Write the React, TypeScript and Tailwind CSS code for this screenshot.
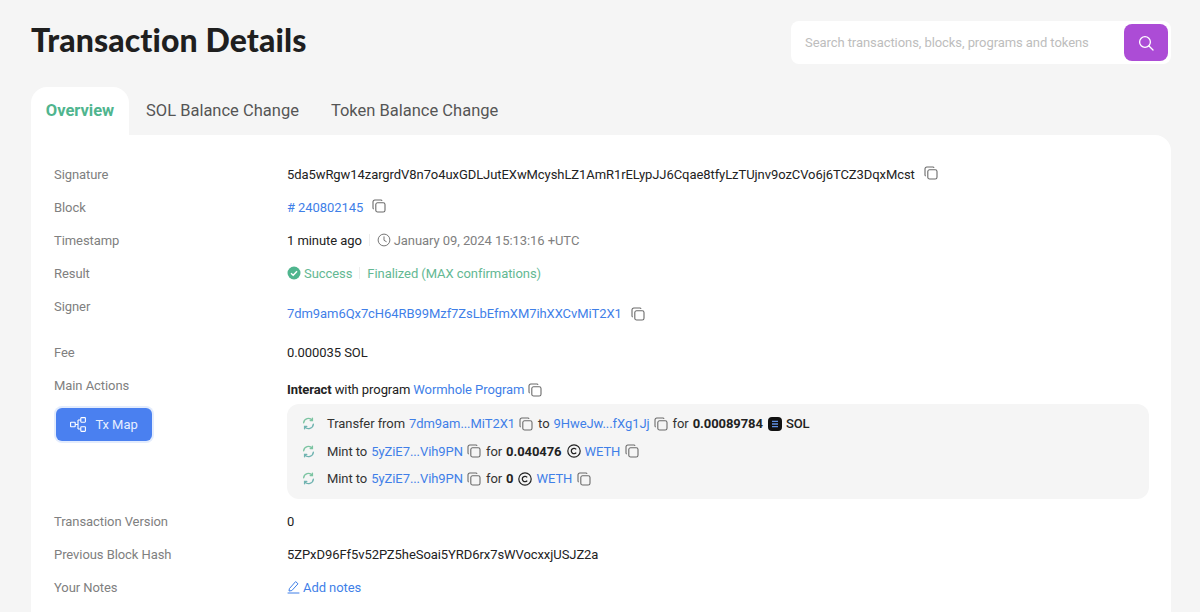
import React from "react";

const Copy = ({ className = "ml-[9px]" }: { className?: string }) => (
  <svg width="14" height="14" viewBox="0 0 14 14" fill="none" stroke="#6b6b6b" strokeWidth="1.1" className={`shrink-0 ${className}`}>
    <rect x="3.8" y="3.8" width="9.2" height="9.2" rx="1.8" />
    <path d="M10 1.8 A1 1 0 0 0 9.2 1 H2.8 A1.8 1.8 0 0 0 1 2.8 V9.2 A1 1 0 0 0 1.8 10" />
  </svg>
);

const Spin = () => (
  <svg width="13" height="13" viewBox="0 0 14 14" fill="none" strokeWidth="1.5" strokeLinecap="round" className="shrink-0">
    <path d="M1.8 6.2 A5.2 5.2 0 0 1 11 3.4" stroke="#7cc4a2" />
    <path d="M11.2 1.4 V3.7 H8.9" stroke="#7cc4a2" />
    <path d="M12.2 7.8 A5.2 5.2 0 0 1 3 10.6" stroke="#6fb3b0" />
    <path d="M2.8 12.6 V10.3 H5.1" stroke="#6fb3b0" />
  </svg>
);

const CoinC = () => (
  <svg width="14" height="14" viewBox="0 0 14 14" fill="none" stroke="#222" className="shrink-0">
    <circle cx="7" cy="7" r="6.2" strokeWidth="1.2" />
    <path d="M9.2 5.4 A2.7 2.7 0 1 0 9.2 8.6" strokeWidth="1.3" />
  </svg>
);

const Link = ({ children }: { children: React.ReactNode }) => <span className="text-[#3f7fe8]">{children}</span>;

const Row = ({ label, children, className = "h-[33px]" }: { label: React.ReactNode; children?: React.ReactNode; className?: string }) => (
  <div className={`flex ${className}`}>
    <div className="w-[233px] shrink-0 text-[#808080] leading-[17px]">{label}</div>
    <div className="flex-1 min-w-0 flex items-start leading-[17px] text-[#222]">{children}</div>
  </div>
);

const ActionLine = ({ children }: { children: React.ReactNode }) => (
  <div className="flex items-center h-[27.5px] whitespace-nowrap text-[#333]">
    <div className="w-[40px] pl-[15px] shrink-0 flex"><Spin /></div>
    {children}
  </div>
);

export default function App() {
  return (
    <div className="w-[1200px] h-[612px] overflow-hidden bg-[#f5f5f5] px-[31px] font-['Roboto',sans-serif] text-[13px] tracking-[-0.07px]">
      <div className="flex items-start justify-between h-[87px] pt-[21px]">
        <h1 className="font-['Lato',sans-serif] font-black text-[32px] leading-[38px] text-[#1f1f1f] tracking-[0.1px]">Transaction Details</h1>
        <div className="w-[380px] h-[43px] bg-white rounded-lg flex items-center pl-[14px] pr-[3px] -mr-[2px] justify-between">
          <span className="text-[13px] text-[#bdbdbd]">Search transactions, blocks, programs and tokens</span>
          <button className="w-[44px] h-[37px] rounded-lg bg-[#ac4cd6] flex items-center justify-center">
            <svg width="16" height="16" viewBox="0 0 16 16" fill="none" stroke="white" strokeWidth="1.3" strokeLinecap="round">
              <circle cx="7" cy="7" r="5.4" />
              <path d="M11 11 L15 15" />
            </svg>
          </button>
        </div>
      </div>

      <div className="flex h-[48px] items-center text-[16.5px] text-[#555] tracking-normal">
        <div className="w-[98px] h-full bg-white rounded-t-[16px] flex items-center justify-center text-[#4fb58e] font-bold text-[16.5px]">Overview</div>
        <div className="ml-[17px]">SOL Balance Change</div>
        <div className="ml-[32px]">Token Balance Change</div>
      </div>

      <div className="w-[1140px] h-[500px] bg-white rounded-tr-[16px] pt-[31px] pl-[23px] pr-[22px]">
        <Row label="Signature">
          <span>5da5wRgw14zargrdV8n7o4uxGDLJutEXwMcyshLZ1AmR1rELypJJ6Cqae8tfyLzTUjnv9ozCVo6j6TCZ3DqxMcst</span>
          <Copy />
        </Row>
        <Row label="Block">
          <Link># 240802145</Link>
          <Copy />
        </Row>
        <Row label="Timestamp">
          <span>1 minute ago</span>
          <span className="w-px h-[12px] bg-[#eee] mx-[7px] mt-[2px]" />
          <svg width="14" height="14" viewBox="0 0 14 14" fill="none" stroke="#777" strokeWidth="1" className="mr-[3px] mt-[1px]">
            <circle cx="7" cy="7" r="5.9" />
            <path d="M7 3.4 V7.3 L9.6 8.8" />
          </svg>
          <span className="text-[#808080]">January 09, 2024 15:13:16 +UTC</span>
        </Row>
        <Row label="Result">
          <svg width="14" height="14" viewBox="0 0 14 14" className="mt-[1px] mr-[3px]">
            <circle cx="7" cy="7" r="6.5" fill="#4fb58e" />
            <path d="M4 7.2 L6.2 9.3 L10 5.2" fill="none" stroke="white" strokeWidth="1.4" />
          </svg>
          <span className="text-[#63b893]">Success</span>
          <span className="w-px h-[12px] bg-[#eee] mx-[7px] mt-[2px]" />
          <span className="text-[#63b893]">Finalized (MAX confirmations)</span>
        </Row>
        <Row label="Signer" className="h-[46px]">
          <span className="flex items-center mt-[7px]">
            <Link>7dm9am6Qx7cH64RB99Mzf7ZsLbEfmXM7ihXXCvMiT2X1</Link>
            <Copy />
          </span>
        </Row>
        <Row label="Fee">0.000035 SOL</Row>
        <div className="flex h-[136px]">
          <div className="w-[233px] shrink-0">
            <div className="text-[#808080] leading-[17px]">Main Actions</div>
            <button className="mt-[14px] ml-[2px] w-[96px] h-[33px] rounded-md bg-[#4a80f0] ring-2 ring-[#e3ecfd] flex items-center justify-center gap-[8px] text-[#e6eeff]">
              <svg width="17" height="15" viewBox="0 0 17 15" fill="none" stroke="white" strokeWidth="1.1">
                <rect x="0.6" y="5.2" width="4.6" height="4.6" rx="0.6" />
                <rect x="10.8" y="0.6" width="4.6" height="4.6" rx="0.6" />
                <rect x="10.8" y="9.8" width="4.6" height="4.6" rx="0.6" />
                <path d="M5.2 7.5 H8 M8 3 V12 M8 3 H10.8 M8 12 H10.8" />
              </svg>
              Tx Map
            </button>
          </div>
          <div className="flex-1 min-w-0">
            <div className="flex items-center h-[17px] mt-[4px] text-[#222] leading-[17px]">
              <b className="font-bold">Interact</b>
              <span className="ml-[3px]">with program</span>
              <span className="ml-[3px]"><Link>Wormhole Program</Link></span>
              <Copy className="ml-[4px]" />
            </div>
            <div className="mt-[6px] bg-[#f5f5f5] rounded-xl py-[6px] h-[95px]">
              <ActionLine>
                Transfer from <span className="ml-[4px]"><Link>7dm9am...MiT2X1</Link></span>
                <Copy className="ml-[4px]" />
                <span className="ml-[5px]">to</span>
                <span className="ml-[4px]"><Link>9HweJw...fXg1Jj</Link></span>
                <Copy className="ml-[4px]" />
                <span className="ml-[5px]">for</span>
                <b className="ml-[4px] text-[#222] font-bold">0.00089784</b>
                <svg width="14" height="14" viewBox="0 0 14 14" className="ml-[5px]">
                  <rect width="14" height="14" rx="4" fill="#111" />
                  <path d="M4 4.4 H10 M4 7 H10 M4 9.6 H10" stroke="#5f8fe0" strokeWidth="1.3" />
                </svg>
                <b className="ml-[4px] text-[#222] font-medium">SOL</b>
              </ActionLine>
              <ActionLine>
                Mint to <span className="ml-[4px]"><Link>5yZiE7...Vih9PN</Link></span>
                <Copy className="ml-[4px]" />
                <span className="ml-[5px]">for</span>
                <b className="ml-[4px] text-[#222] font-bold">0.040476</b>
                <span className="ml-[5px] flex"><CoinC /></span>
                <span className="ml-[4px]"><Link>WETH</Link></span>
                <Copy className="ml-[5px]" />
              </ActionLine>
              <ActionLine>
                Mint to <span className="ml-[4px]"><Link>5yZiE7...Vih9PN</Link></span>
                <Copy className="ml-[4px]" />
                <span className="ml-[5px]">for</span>
                <b className="ml-[4px] text-[#222] font-bold">0</b>
                <span className="ml-[5px] flex"><CoinC /></span>
                <span className="ml-[4px]"><Link>WETH</Link></span>
                <Copy className="ml-[5px]" />
              </ActionLine>
            </div>
          </div>
        </div>
        <Row label="Transaction Version">0</Row>
        <Row label="Previous Block Hash">
          <span>5ZPxD96Ff5v52PZ5heSoai5YRD6rx7sWVocxxjUSJZ2a</span>
        </Row>
        <Row label="Your Notes">
          <svg width="13" height="14" viewBox="0 0 13 14" fill="none" stroke="#3f7fe8" strokeWidth="1" className="mr-[3px] mt-[1px]">
            <path d="M2.4 8.6 L8.6 1.6 L11 3.8 L4.8 10.6 L2 11 Z" />
            <path d="M0.6 13 H12.4" />
          </svg>
          <Link>Add notes</Link>
        </Row>
      </div>
    </div>
  );
}
